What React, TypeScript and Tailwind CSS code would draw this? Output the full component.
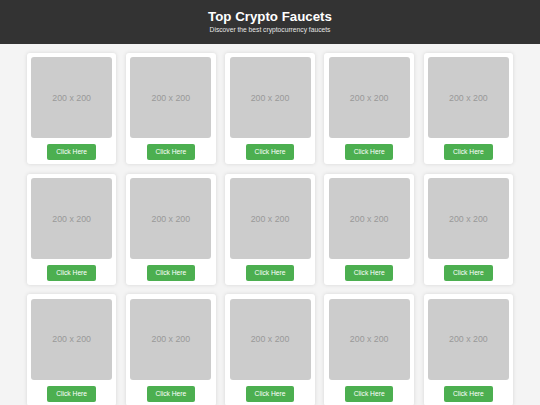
const faucets = Array.from({ length: 15 }, (_, i) => ({ id: i + 1 }));

function FaucetCard() {
  return (
    <div className="flex w-[89.6px] flex-col items-center rounded-[3px] bg-white px-[4.3px] pt-[4.6px] pb-[3.6px] shadow-[0_0_4px_rgba(0,0,0,0.12)]">
      <div className="flex h-[81px] w-[81px] items-center justify-center rounded-[3px] bg-[#cccccc] pt-[1px] text-[8.8px] text-[#999999]">
        200 x 200
      </div>
      <button
        type="button"
        className="mt-[6px] flex h-[16px] w-[48.6px] items-center justify-center rounded-[2px] bg-[#4caf50] text-[6.7px] text-white"
      >
        Click Here
      </button>
    </div>
  );
}

export default function App() {
  return (
    <div className="min-h-screen bg-[#f4f4f4] font-['Liberation_Sans',Arial,sans-serif]">
      <header className="flex h-[44px] flex-col items-center bg-[#333333] pt-[8.6px] text-center">
        <h1 className="text-[13.3px] leading-[15px] font-bold text-white">Top Crypto Faucets</h1>
        <p className="mt-[2px] text-[6.7px] leading-[7.5px] text-[#e6e6e6]">
          Discover the best cryptocurrency faucets
        </p>
      </header>

      <main className="flex flex-wrap justify-center gap-x-[9.6px] gap-y-[9.7px] px-[26px] pt-[8.7px] pb-4">
        {faucets.map((faucet) => (
          <FaucetCard key={faucet.id} />
        ))}
      </main>
    </div>
  );
}
